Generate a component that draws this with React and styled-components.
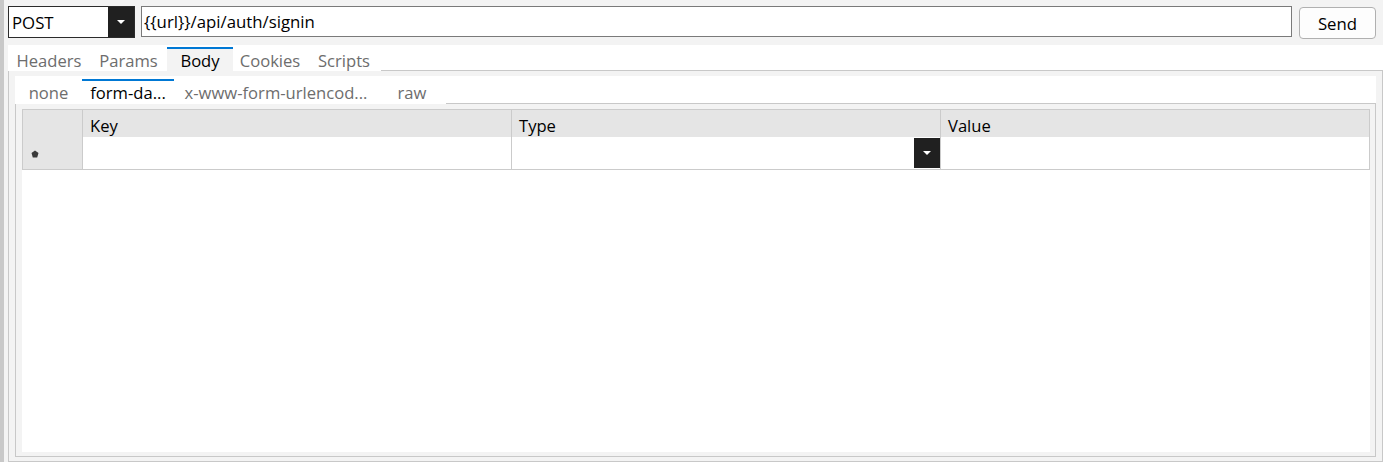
import React, { useState } from 'react';
import styled, { createGlobalStyle } from 'styled-components';

const GlobalStyle = createGlobalStyle`
  html, body {
    margin: 0;
    padding: 0;
    background: #f3f3f3;
  }
  * {
    box-sizing: border-box;
  }
`;

const Window = styled.div`
  display: flex;
  height: 462px;
  font-family: "Open Sans", "Noto Sans", sans-serif;
  color: #000;
  overflow: hidden;
`;

const LeftStrip = styled.div`
  width: 4px;
  background: #c8c8c8;
  flex-shrink: 0;
`;

const Main = styled.div`
  flex: 1;
  display: flex;
  flex-direction: column;
  padding-left: 4px;
`;

const TopBar = styled.div`
  height: 45px;
  display: flex;
  align-items: flex-start;
  padding: 6px 7px 0 0;
`;

const Combo = styled.div`
  width: 127px;
  height: 32px;
  display: flex;
  border: 1px solid #2b2b2b;
  background: #fff;
`;

const ComboText = styled.div`
  flex: 1;
  font-size: 16.8px;
  line-height: 31px;
  padding-left: 3px;
`;

const DropButton = styled.div`
  width: ${p => p.$w}px;
  height: ${p => p.$h}px;
  background: #202020;
  display: flex;
  align-items: center;
  justify-content: center;
  flex-shrink: 0;
`;

const Arrow = styled.div`
  width: 0;
  height: 0;
  border-left: 4px solid transparent;
  border-right: 4px solid transparent;
  border-top: 4px solid #fff;
`;

const UrlInput = styled.div`
  flex: 1;
  height: 31px;
  margin-left: 6px;
  border: 1px solid #7a7a7a;
  background: #fff;
  font-size: 16.8px;
  line-height: 30px;
  padding-left: 2px;
`;

const SendButton = styled.button`
  width: 77px;
  height: 32px;
  margin-left: 7px;
  margin-top: 1px;
  border: 1px solid #b0b0b0;
  border-radius: 4px;
  background: #fdfdfd;
  font-family: inherit;
  font-size: 16.8px;
  color: #000;
  padding: 0;
`;

const TabStrip = styled.div`
  display: flex;
  align-items: flex-end;
  height: ${p => p.$h}px;
  background: #fff;
  flex-shrink: 0;
`;

const Tab = styled.div`
  width: ${p => p.$w}px;
  height: ${p => p.$h}px;
  text-align: center;
  font-size: 16.6px;
  padding-top: ${p => p.$pt}px;
  line-height: ${p => p.$h - 4 - p.$pt}px;
  color: ${p => (p.$active ? '#000' : '#6d6d6d')};
  background: ${p => (p.$active ? p.$activeBg : '#fff')};
  border-top: 2px solid ${p => (p.$active ? '#0078d4' : 'transparent')};
  white-space: nowrap;
  cursor: default;
`;

const TabFiller = styled.div`
  flex: 1;
  align-self: stretch;
  border-bottom: 1px solid #c8c8c8;
`;

const Panel = styled.div`
  flex: 1;
  display: flex;
  flex-direction: column;
  background: #f3f3f3;
  border: 1px solid #c8c8c8;
  border-top: none;
  padding: ${p => p.$pad};
  min-height: 0;
`;

const Grid = styled.div`
  flex: 1;
  background: #fff;
  display: flex;
  flex-direction: column;
`;

const GridRow = styled.div`
  display: grid;
  grid-template-columns: 61px 1fr 1fr 1fr;
  height: ${p => p.$h}px;
`;

const Cell = styled.div`
  border-right: 1px solid #cbcbcb;
  border-bottom: 1px solid #cbcbcb;
  border-left: ${p => (p.$first ? '1px solid #cbcbcb' : 'none')};
  border-top: ${p => (p.$top ? '1px solid #cbcbcb' : 'none')};
  background: ${p => (p.$header ? '#e5e5e5' : '#fff')};
  font-size: 16.6px;
  padding-left: 7px;
  padding-top: ${p => (p.$header && !p.$first ? '4px' : '0')};
  display: flex;
  align-items: center;
  justify-content: ${p => (p.$end ? 'flex-end' : 'flex-start')};
`;

const RowGlyph = styled.svg`
  width: 8px;
  height: 8px;
  margin-left: 1px;
  margin-top: 2px;
`;

const mainTabs = [
  { label: 'Headers', w: 82 },
  { label: 'Params', w: 77 },
  { label: 'Body', w: 66 },
  { label: 'Cookies', w: 74 },
  { label: 'Scripts', w: 74 },
];

const bodyTabs = [
  { label: 'none', w: 67 },
  { label: 'form-da...', w: 92 },
  { label: 'x-www-form-urlencod...', w: 204 },
  { label: 'raw', w: 68 },
];

const App = () => {
  const [mainTab, setMainTab] = useState('Body');
  const [bodyTab, setBodyTab] = useState('form-da...');

  return (
    <>
      <GlobalStyle />
      <Window>
        <LeftStrip />
        <Main>
          <TopBar>
            <Combo>
              <ComboText>POST</ComboText>
              <DropButton $w={26} $h={30}>
                <Arrow />
              </DropButton>
            </Combo>
            <UrlInput>{'{{url}}/api/auth/signin'}</UrlInput>
            <SendButton>Send</SendButton>
          </TopBar>

          <TabStrip $h={26}>
            {mainTabs.map(t => (
              <Tab
                key={t.label}
                $w={t.w}
                $h={24}
                $pt={3}
                $active={t.label === mainTab}
                $activeBg="#f3f3f3"
                onClick={() => setMainTab(t.label)}
              >
                {t.label}
              </Tab>
            ))}
            <TabFiller />
          </TabStrip>

          <Panel $pad="5px 6px 4px 6px">
            <TabStrip $h={28}>
              {bodyTabs.map(t => (
                <Tab
                  key={t.label}
                  $w={t.w}
                  $h={25}
                  $pt={2}
                  $active={t.label === bodyTab}
                  $activeBg="#fff"
                  onClick={() => setBodyTab(t.label)}
                >
                  {t.label}
                </Tab>
              ))}
              <TabFiller />
            </TabStrip>
            <Panel $pad="5px 5px 4px 6px">
              <Grid>
                <GridRow $h={28}>
                  <Cell $header $first $top />
                  <Cell $header $top>Key</Cell>
                  <Cell $header $top>Type</Cell>
                  <Cell $header $top>Value</Cell>
                </GridRow>
                <GridRow $h={33}>
                  <Cell $header $first>
                    <RowGlyph viewBox="0 0 8 8">
                      <polygon points="4,0.5 7.5,3 6.2,7.5 1.8,7.5 0.5,3" fill="#3a3a3a" />
                    </RowGlyph>
                  </Cell>
                  <Cell />
                  <Cell $end>
                    <DropButton $w={26} $h={30}>
                      <Arrow />
                    </DropButton>
                  </Cell>
                  <Cell />
                </GridRow>
              </Grid>
            </Panel>
          </Panel>
        </Main>
      </Window>
    </>
  );
};

export default App;
